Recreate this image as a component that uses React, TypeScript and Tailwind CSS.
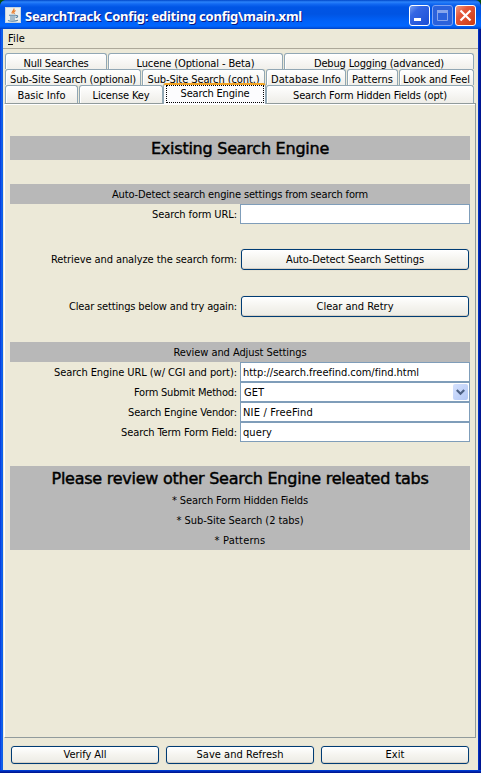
import { useLayoutEffect, useRef, useState } from "react";

const UI_FONT = "[font-family:'DejaVu_Sans_Condensed','DejaVu_Sans',sans-serif] [font-stretch:condensed]";
const HEADING = "text-[16px] leading-[26px] [font-family:'DejaVu_Sans',sans-serif] [font-stretch:normal] [-webkit-text-stroke:0.45px_#000]";

/** Single line of text tracked so that it occupies a given width. */
function Fit({ text, w, className = "", underlineFirst = false }: { text: string; w: number; className?: string; underlineFirst?: boolean }) {
  const ref = useRef<HTMLSpanElement>(null);
  const [spacing, setSpacing] = useState(0);
  useLayoutEffect(() => {
    const el = ref.current;
    if (!el) return;
    el.style.letterSpacing = "0px";
    const natural = el.getBoundingClientRect().width;
    const next = (w + 1 - natural) / text.length;
    el.style.letterSpacing = `${next}px`;
    setSpacing(next);
  }, [text, w]);
  return (
    <span ref={ref} className={`inline-block whitespace-pre ${className}`} style={{ letterSpacing: `${spacing}px` }}>
      {underlineFirst ? (
        <>
          <span className="underline underline-offset-2">{text[0]}</span>
          {text.slice(1)}
        </>
      ) : (
        text
      )}
    </span>
  );
}

function Tab({ text, w, size }: { text: string; w: number; size: string }) {
  return (
    <div className={`${size} flex h-5 shrink-0 justify-center rounded-t-[3px] border border-b-0 border-[#91a7b4] bg-gradient-to-b from-white to-[#ecebe5] pt-px leading-[17px] shadow-[inset_1px_1px_0_#fff]`}>
      <Fit text={text} w={w} />
    </div>
  );
}

function Button({ text, w, className }: { text: string; w: number; className: string }) {
  return (
    <button className={`${className} flex items-center justify-center rounded-[3px] border border-[#003c74] bg-gradient-to-b from-white via-[#f5f4ef] to-[#ecebe4] shadow-[inset_0_-1px_0_#d6d0c5,0_0_0_1px_#e6e2d2]`}>
      <Fit text={text} w={w} />
    </button>
  );
}

function Header({ text, w }: { text: string; w: number }) {
  return (
    <div className="flex h-5 items-center justify-center bg-[#b8b8b8] pt-[2px]">
      <Fit text={text} w={w} />
    </div>
  );
}

function Label({ text, w, className = "pt-[2px]" }: { text: string; w: number; className?: string }) {
  return (
    <div className={`flex w-[230px] shrink-0 items-center justify-end pr-[3px] ${className}`}>
      <Fit text={text} w={w} />
    </div>
  );
}

function Field({ text, w }: { text?: string; w?: number }) {
  return (
    <div className="flex h-5 w-[230px] items-center border border-[#7f9db9] bg-white pl-[2px] pt-[2px]">
      {text && w ? <Fit text={text} w={w} /> : null}
    </div>
  );
}

function TitleBar() {
  return (
    <header className="flex h-[29px] shrink-0 items-center rounded-t-[6px] bg-[linear-gradient(180deg,#0046c8_0,#2b83fb_2px,#1269f2_4px,#0055e5_7px,#0054e3_14px,#0061f8_21px,#0066ff_26px,#0050dc_28px,#0040c0_29px)] pl-[5px] pr-[5px]">
      <svg className="mt-px shrink-0" width="16" height="16" viewBox="0 0 16 16">
        <rect width="16" height="16" fill="#c9d5df" />
        <rect x="1" y="1" width="14" height="14" fill="#edf0ed" />
        <path d="M8.8 1.5c1.5 2-3.3 3-1.4 5.2M10.5 3.5c-2.2 1.2-2.3 2-1 3.4" fill="none" stroke="#e87722" strokeWidth="1.2" />
        <path d="M4 8.3h7M5 10h5.5M5 12h5M11 8.6c2.5-.5 2 1.8-.2 2.2M3 13.5c2 1 7.500 .8 10-.3" fill="none" stroke="#5c86a7" strokeWidth="1.1" />
      </svg>
      <Fit
        text="SearchTrack Config: editing config\main.xml"
        w={276}
        className="ml-1 mt-[2px] text-[13px] font-bold leading-4 text-white [font-family:'Noto_Sans',sans-serif] [text-shadow:1px_1px_0_#0a1883]"
      />
      <div className="ml-auto mt-[2px] flex gap-[2px]">
        <svg width="21" height="21" viewBox="0 0 21 21">
          <defs>
            <linearGradient id="blue" x1="0" y1="0" x2="1" y2="1">
              <stop offset="0" stopColor="#7ba2f0" />
              <stop offset=".3" stopColor="#3567e4" />
              <stop offset="1" stopColor="#1a4dd4" />
            </linearGradient>
            <linearGradient id="red" x1="0" y1="0" x2="1" y2="1">
              <stop offset="0" stopColor="#f0a088" />
              <stop offset=".35" stopColor="#e4573a" />
              <stop offset="1" stopColor="#cc3a10" />
            </linearGradient>
          </defs>
          <rect x=".5" y=".5" width="20" height="20" rx="2.500" fill="url(#blue)" stroke="#fff" />
          <rect x="5" y="13" width="7" height="3" fill="#fff" />
        </svg>
        <svg width="21" height="21" viewBox="0 0 21 21">
          <rect x=".5" y=".5" width="20" height="20" rx="2.500" fill="#2b62dc" stroke="#7da3f3" />
          <path d="M5.500 6v9.500h10V6" fill="none" stroke="#88a6ec" />
          <rect x="5" y="5" width="11" height="3" fill="#88a6ec" />
        </svg>
        <svg width="21" height="21" viewBox="0 0 21 21">
          <rect x=".5" y=".5" width="20" height="20" rx="2.500" fill="url(#red)" stroke="#fff" />
          <path d="M5.500 5.500l10 10M15.500 5.500l-10 10" stroke="#fff" strokeWidth="2.200" />
        </svg>
      </div>
    </header>
  );
}

export default function App() {
  return (
    <div className="h-[773px] w-[481px] bg-[#08510f]">
      <div className={`flex h-full flex-col overflow-hidden rounded-t-[6px] bg-[linear-gradient(90deg,#0831d9_0,#0a50e8_1px,#166aee_2px,#0855dd_3px,#0855dd_50%,#0040e0_478px,#001ea0_479px,#00138c_481px)] text-[11px] leading-[14px] text-black ${UI_FONT}`}>
        <TitleBar />
        <div className="mx-auto flex w-[475px] min-h-0 flex-1 flex-col bg-[#ece9d8]">
          <nav className="flex h-5 shrink-0 items-center border-b border-[#aca899] pl-[5px]">
            <Fit text="File" w={16} underlineFirst />
          </nav>
          <div className="mt-1 shrink-0 pl-[2px]">
            <div className="flex h-4 gap-px overflow-hidden">
              <Tab text="Null Searches" w={64} size="w-[102px]" />
              <Tab text="Lucene (Optional - Beta)" w={117} size="w-[175px]" />
              <Tab text="Debug Logging (advanced)" w={129} size="w-[190px]" />
            </div>
            <div className="flex h-4 gap-px overflow-hidden">
              <Tab text="Sub-Site Search (optional)" w={125} size="w-[136px]" />
              <Tab text="Sub-Site Search (cont.)" w={111} size="w-[123px]" />
              <Tab text="Database Info" w={69} size="w-[80px]" />
              <Tab text="Patterns" w={40} size="w-[51px]" />
              <Tab text="Look and Feel" w={66} size="w-[75px]" />
            </div>
            <div className="flex h-[18px]">
              <Tab text="Basic Info" w={47} size="mr-px w-[73px]" />
              <Tab text="License Key" w={56} size="w-[84px]" />
              <div className="relative z-10 -mt-[2px] h-[21px] w-[103px] shrink-0 rounded-t-[3px] border-x border-t-2 border-x-[#91a7b4] border-t-[#f5a523] bg-[#fcfcfe] pl-[2px] pr-px">
                <div className="flex h-[18px] justify-center border border-dotted border-black leading-[15px]">
                  <Fit text="Search Engine" w={68} />
                </div>
              </div>
              <Tab text="Search Form Hidden Fields (opt)" w={153} size="w-[208px]" />
            </div>
          </div>
          <main className="ml-px mr-[2px] flex h-[635px] shrink-0 flex-col border border-[#919b9c] border-l-white px-[5px] shadow-[inset_0_1px_0_#fff]">
            <div className="mt-8 flex h-6 shrink-0 items-center justify-center bg-[#b8b8b8] pt-[2px]">
              <Fit text="Existing Search Engine" w={177} className={HEADING} />
            </div>
            <div className="mt-6">
              <Header text="Auto-Detect search engine settings from search form" w={255} />
              <div className="flex h-5">
                <Label text="Search form URL:" w={84} />
                <Field />
              </div>
            </div>
            <div className="mt-6 flex h-[23px]">
              <Label text="Retrieve and analyze the search form:" w={185} className="" />
              <Button text="Auto-Detect Search Settings" w={137} className="ml-px mt-px h-[21px] w-[228px]" />
            </div>
            <div className="mt-6 flex h-[23px]">
              <Label text="Clear settings below and try again:" w={167} className="" />
              <Button text="Clear and Retry" w={76} className="ml-px mt-px h-[21px] w-[228px]" />
            </div>
            <div className="mt-6">
              <Header text="Review and Adjust Settings" w={132} />
              <div className="flex h-5">
                <Label text="Search Engine URL (w/ CGI and port):" w={182} />
                <Field text="http://search.freefind.com/find.html" w={175} />
              </div>
              <div className="flex h-5">
                <Label text="Form Submit Method:" w={102} />
                <div className="flex h-5 w-[230px] items-center justify-between border border-[#7f9db9] bg-white pl-[3px] pr-px">
                  <Fit text="GET" w={19} className="pt-[2px]" />
                  <div className="flex h-4 w-[15px] items-center justify-center rounded-[2px] bg-gradient-to-br from-[#d5e1fd] to-[#b3c8f6]">
                    <svg width="9" height="7" viewBox="0 0 9 7">
                      <path d="M.8 1l3.700 3.700L8.200 1" fill="none" stroke="#4d6185" strokeWidth="2.200" />
                    </svg>
                  </div>
                </div>
              </div>
              <div className="flex h-5">
                <Label text="Search Engine Vendor:" w={108} />
                <Field text="NIE / FreeFind" w={69} />
              </div>
              <div className="flex h-5">
                <Label text="Search Term Form Field:" w={115} />
                <Field text="query" w={28} />
              </div>
            </div>
            <div className="mt-6 flex h-[84px] shrink-0 flex-col items-center bg-[#b8b8b8]">
              <Fit text="Please review other Search Engine releated tabs" w={376} className={`-mb-px ${HEADING}`} />
              <Fit text="* Search Form Hidden Fields" w={135} className="leading-5" />
              <Fit text="* Sub-Site Search (2 tabs)" w={126} className="leading-5" />
              <Fit text="* Patterns" w={50} className="leading-5" />
            </div>
          </main>
          <footer className="mt-2 flex gap-[7px] pl-2">
            <Button text="Verify All" w={42} className="h-[18px] w-[148px]" />
            <Button text="Save and Refresh" w={86} className="h-[18px] w-[148px]" />
            <Button text="Exit" w={18} className="h-[18px] w-[148px]" />
          </footer>
        </div>
        <div className="h-[3px] shrink-0 bg-[linear-gradient(180deg,#0046e0,#001ea0_2px,#00138c)]" />
      </div>
    </div>
  );
}
